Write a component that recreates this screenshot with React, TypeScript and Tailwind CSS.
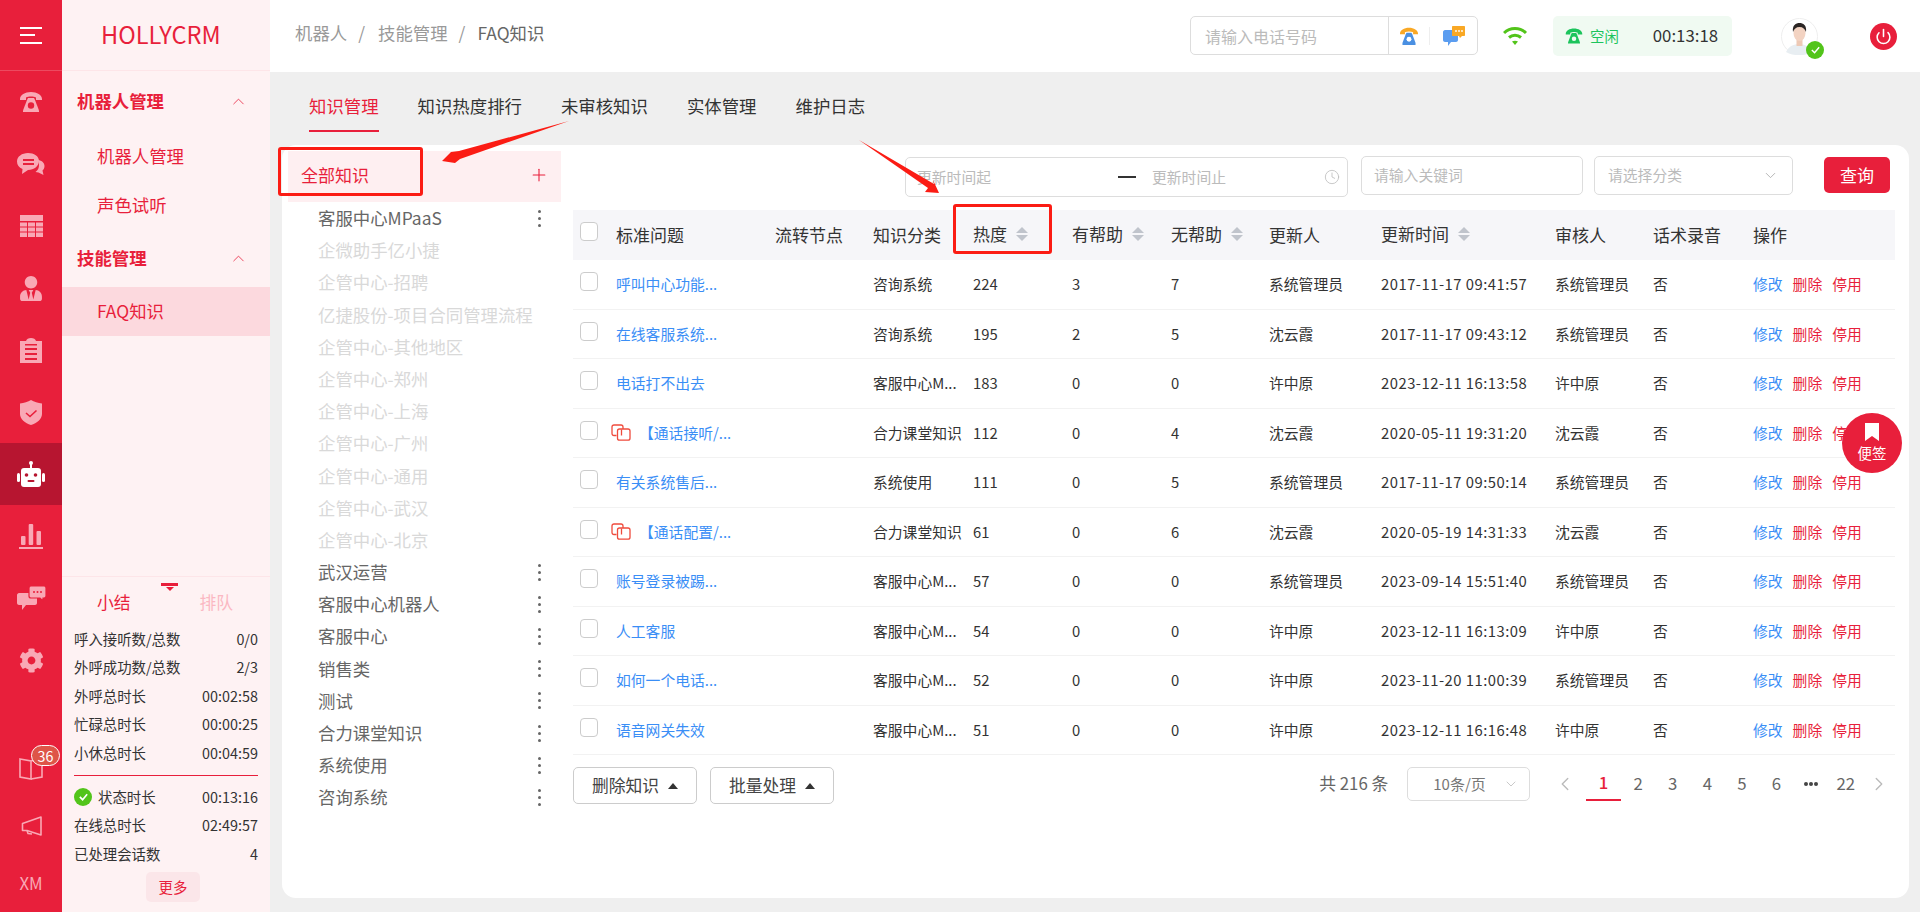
import { ChevronDown, ChevronLeft, ChevronRight, ChevronUp, Clock, Plus, Power } from 'lucide-react'
import { FaCog, FaUserTie } from 'react-icons/fa'

const rows = [
  { title: '呼叫中心功能...', cat: '咨询系统', hot: 224, yes: 3, no: 7, by: '系统管理员', time: '2017-11-17 09:41:57', rev: '系统管理员' },
  { title: '在线客服系统...', cat: '咨询系统', hot: 195, yes: 2, no: 5, by: '沈云霞', time: '2017-11-17 09:43:12', rev: '系统管理员' },
  { title: '电话打不出去', cat: '客服中心M...', hot: 183, yes: 0, no: 0, by: '许中原', time: '2023-12-11 16:13:58', rev: '许中原' },
  { title: '【通话接听/...', cat: '合力课堂知识', hot: 112, yes: 0, no: 4, by: '沈云霞', time: '2020-05-11 19:31:20', rev: '沈云霞', linked: true },
  { title: '有关系统售后...', cat: '系统使用', hot: 111, yes: 0, no: 5, by: '系统管理员', time: '2017-11-17 09:50:14', rev: '系统管理员' },
  { title: '【通话配置/...', cat: '合力课堂知识', hot: 61, yes: 0, no: 6, by: '沈云霞', time: '2020-05-19 14:31:33', rev: '沈云霞', linked: true },
  { title: '账号登录被踢...', cat: '客服中心M...', hot: 57, yes: 0, no: 0, by: '系统管理员', time: '2023-09-14 15:51:40', rev: '系统管理员' },
  { title: '人工客服', cat: '客服中心M...', hot: 54, yes: 0, no: 0, by: '许中原', time: '2023-12-11 16:13:09', rev: '许中原' },
  { title: '如何一个电话...', cat: '客服中心M...', hot: 52, yes: 0, no: 0, by: '许中原', time: '2023-11-20 11:00:39', rev: '系统管理员' },
  { title: '语音网关失效', cat: '客服中心M...', hot: 51, yes: 0, no: 0, by: '许中原', time: '2023-12-11 16:16:48', rev: '许中原' },
]

const tree = [
  { name: '客服中心MPaaS', more: true },
  { name: '企微助手亿小捷' },
  { name: '企管中心-招聘' },
  { name: '亿捷股份-项目合同管理流程' },
  { name: '企管中心-其他地区' },
  { name: '企管中心-郑州' },
  { name: '企管中心-上海' },
  { name: '企管中心-广州' },
  { name: '企管中心-通用' },
  { name: '企管中心-武汉' },
  { name: '企管中心-北京' },
  { name: '武汉运营', more: true },
  { name: '客服中心机器人', more: true },
  { name: '客服中心', more: true },
  { name: '销售类', more: true },
  { name: '测试', more: true },
  { name: '合力课堂知识', more: true },
  { name: '系统使用', more: true },
  { name: '咨询系统', more: true },
]

const stats = [
  ['呼入接听数/总数', '0/0'],
  ['外呼成功数/总数', '2/3'],
  ['外呼总时长', '00:02:58'],
  ['忙碌总时长', '00:00:25'],
  ['小休总时长', '00:04:59'],
]

const cols = 'grid grid-cols-[43px_159px_98px_100px_99px_99px_98px_112px_174px_98px_100px_142px]'

function RailIcon({ name }: { name: string }) {
  const c = '#f9a8b5'
  if (name === 'phone')
    return (
      <svg viewBox="0 0 24 22" className="w-[24px] h-[22px]">
        <path d="M1 8c0-4 5-7 11-7s11 3 11 7v1h-6V6.500c-1.500-.6-3-.9-5-.9s-3.500.3-5 .9V9H1V8z" fill={c} />
        <path d="M9 7h6l1 2 4 10.500V21H4v-1.500L8 9l1-2z" fill={c} />
        <circle cx="12" cy="14.500" r="3.200" fill="#e81f3b" />
      </svg>
    )
  if (name === 'chat')
    return (
      <svg viewBox="0 0 28 22" className="w-[28px] h-[22px]">
        <path d="M21 7c4 .5 6.500 3 6.500 6 0 2-1 3.500-2 4.500l1 4.500-5-2.500-3-.5c2.500-2 3.500-4 3.500-7 0-2-.2-3.500-1-5z" fill={c} />
        <path d="M11 0c6 0 11 3 11 8s-5 9-11 9l-6 4 .5-5C2 14.500 0 12 0 8.500 0 3.500 5 0 11 0z" fill={c} />
        <rect x="6" y="6" width="11" height="2" fill="#e81f3b" />
        <rect x="6" y="10" width="11" height="2" fill="#e81f3b" />
      </svg>
    )
  if (name === 'grid')
    return (
      <svg viewBox="0 0 23 22" className="w-[23px] h-[22px]" fill={c}>
        <rect x="0" y="0" width="23" height="6" />
        <rect x="0" y="7.500" width="7" height="4" />
        <rect x="8" y="7.500" width="7" height="4" />
        <rect x="16" y="7.500" width="7" height="4" />
        <rect x="0" y="12.500" width="7" height="4" />
        <rect x="8" y="12.500" width="7" height="4" />
        <rect x="16" y="12.500" width="7" height="4" />
        <rect x="0" y="17.500" width="7" height="4.500" />
        <rect x="8" y="17.500" width="7" height="4.500" />
        <rect x="16" y="17.500" width="7" height="4.500" />
      </svg>
    )
  if (name === 'clip')
    return (
      <svg viewBox="0 0 22 25" className="w-[22px] h-[25px]">
        <path d="M0 3h6c.5-2 2.500-3 5-3s4.500 1 5 3h6v22H0V3z" fill={c} />
        <rect x="5" y="10" width="12" height="2" fill="#e81f3b" />
        <rect x="5" y="15" width="12" height="2" fill="#e81f3b" />
        <rect x="5" y="20" width="12" height="2" fill="#e81f3b" />
        <rect x="5" y="6" width="12" height="1.500" fill="#e81f3b" />
      </svg>
    )
  if (name === 'shield')
    return (
      <svg viewBox="0 0 22 25" className="w-[22px] h-[25px]">
        <path d="M11 0c3 2 7 3 11 3.500V14c0 5-5 9-11 11C5 23 0 19 0 14V3.500C4 3 8 2 11 0z" fill={c} />
        <path d="M6 13l4 3.500 6.500-6" fill="none" stroke="#e81f3b" strokeWidth="1.600" />
      </svg>
    )
  if (name === 'robot')
    return (
      <svg viewBox="0 0 28 26" className="w-[28px] h-[26px]">
        <circle cx="14" cy="2" r="2" fill="#fff" />
        <rect x="13" y="3" width="2" height="5" fill="#fff" />
        <rect x="4" y="7" width="20" height="19" rx="3" fill="#fff" />
        <rect x="0" y="12" width="3" height="9" rx="1.500" fill="#fff" />
        <rect x="25" y="12" width="3" height="9" rx="1.500" fill="#fff" />
        <circle cx="9.500" cy="14" r="1.800" fill="#b71530" />
        <circle cx="18.500" cy="14" r="1.800" fill="#b71530" />
        <rect x="10.500" y="19" width="7" height="2" rx="1" fill="#b71530" />
      </svg>
    )
  if (name === 'bars')
    return (
      <svg viewBox="0 0 24 25" className="w-[24px] h-[25px]" fill={c}>
        <rect x="2" y="12" width="4.500" height="9" rx="1" />
        <rect x="9.700" y="0" width="4.500" height="21" rx="1" />
        <rect x="17.500" y="7" width="4.500" height="14" rx="1" />
        <rect x="0" y="23" width="24" height="2" />
      </svg>
    )
  if (name === 'chat2')
    return (
      <svg viewBox="0 0 29 24" className="w-[29px] h-[24px]">
        <path d="M2 7h16c1 0 2 1 2 2v8c0 1-1 2-2 2H9l-4 5v-5H2c-1 0-2-1-2-2V9c0-1 1-2 2-2z" fill={c} />
        <path d="M14 0h13c1 0 2 1 2 2v8c0 1-1 2-2 2h-1v3l-3-3h-9c-1 0-2-1-2-2V2c0-1 1-2 2-2z" fill={c} stroke="#e81f3b" strokeWidth="1.200" />
        <circle cx="17" cy="6" r="1" fill="#e81f3b" />
        <circle cx="20.500" cy="6" r="1" fill="#e81f3b" />
        <circle cx="24" cy="6" r="1" fill="#e81f3b" />
      </svg>
    )
  if (name === 'book')
    return (
      <svg viewBox="0 0 24 24" className="w-[24px] h-[24px]" fill="none" stroke={c} strokeWidth="1.600">
        <path d="M1 3l11 2v18L1 21V3z" />
        <path d="M12 5l11-3v19l-11 2" />
      </svg>
    )
  return (
    <svg viewBox="0 0 21 21" className="w-[21px] h-[21px]" fill="none" stroke={c} strokeWidth="1.600" strokeLinejoin="round">
      <path d="M20 1v18L6 14.500H1.500V7.500L20 1z" />
      <path d="M6 14.500l1 3 4 .5" />
    </svg>
  )
}

function RailItem({ name, active }: { name: string; active?: boolean }) {
  return (
    <div className={`h-[62px] flex items-center justify-center ${active ? 'bg-[#b71530]' : ''}`}>
      {name === 'user' ? <FaUserTie className="w-[22px] h-[25px] text-[#f9a8b5]" /> : name === 'gear' ? <FaCog className="w-[25px] h-[25px] text-[#f9a8b5]" /> : <RailIcon name={name} />}
    </div>
  )
}

function Rail() {
  return (
    <div className="w-[62px] shrink-0 bg-[#e81f3b] flex flex-col">
      <div className="h-[71px] border-b border-[#ec4a60] flex flex-col justify-center gap-[5.500px] pl-[20px]">
        <div className="w-[22px] h-[2px] bg-white" />
        <div className="w-[15px] h-[2px] bg-white" />
        <div className="w-[22px] h-[2px] bg-white" />
      </div>
      {['phone', 'chat', 'grid', 'user', 'clip', 'shield'].map((n) => (
        <RailItem key={n} name={n} />
      ))}
      <RailItem name="robot" active />
      {['bars', 'chat2', 'gear'].map((n) => (
        <RailItem key={n} name={n} />
      ))}
      <div className="mt-auto">
        <div className="h-[59px] flex items-center justify-center relative">
          <RailIcon name="book" />
          <span className="absolute left-[31px] top-[7px] w-[29px] h-[21px] rounded-full bg-[#de5548] border border-white text-white text-[14.400px] leading-[19px] text-center">36</span>
        </div>
        <div className="h-[59px] flex items-center justify-center">
          <RailIcon name="mega" />
        </div>
        <div className="h-[56px] flex items-center justify-center pb-[1px] text-[#f9a8b5] text-[16.800px]">XM</div>
      </div>
    </div>
  )
}

function Sidebar() {
  return (
    <div className="w-[208px] shrink-0 bg-[#fef2f3] flex flex-col text-[#e81f3b]">
      <div className="h-[71px] border-b border-[#fde5e8] flex items-center pl-[39px] text-[23.600px]">HOLLYCRM</div>
      <div className="h-[61px] flex items-center justify-between pl-[15px] pr-[22px] text-[17.400px] font-bold">
        <span>机器人管理</span>
        <ChevronUp className="w-[19px] h-[19px]" strokeWidth={1} />
      </div>
      <div className="h-[49px] flex items-center pl-[35px] text-[17.400px]">机器人管理</div>
      <div className="h-[49px] flex items-center pl-[35px] text-[17.400px]">声色试听</div>
      <div className="h-[57px] flex items-center justify-between pl-[15px] pr-[22px] text-[17.400px] font-bold">
        <span>技能管理</span>
        <ChevronUp className="w-[19px] h-[19px]" strokeWidth={1} />
      </div>
      <div className="h-[49px] flex items-center pl-[35px] text-[17.400px] bg-[#fcd9de]">FAQ知识</div>

      <div className="mt-auto border-t border-[#fde5e8] relative">
        <div className="absolute left-[99px] top-[6px] w-[17px] h-[3px] bg-[#e81f3b]" />
        <div className="absolute left-[104px] top-[10px] w-0 h-0 border-x-[4px] border-x-transparent border-t-[4px] border-t-[#e81f3b]" />
        <div className="flex pt-[12px] pl-[35px] text-[16.800px] leading-[26px]">
          <span>小结</span>
          <span className="ml-[69px] text-[#fbb8c2]">排队</span>
        </div>
        <div className="px-[12px] pt-[10px] text-[#333] text-[14.400px]">
          {stats.map(([k, v]) => (
            <div key={k} className="flex justify-between h-[28.400px] items-center">
              <span>{k}</span>
              <span>{v}</span>
            </div>
          ))}
          <div className="border-t border-[#e81f3b] mt-[8px] mb-[7px]" />
          <div className="flex justify-between h-[28.500px] items-center">
            <span className="flex items-center gap-[6px]">
              <span className="w-[18px] h-[18px] rounded-full bg-[#52c41a] flex items-center justify-center">
                <svg viewBox="0 0 12 12" className="w-[11px] h-[11px]" fill="none" stroke="#fff" strokeWidth="1.800">
                  <path d="M2 6.500l3 3 5-6" />
                </svg>
              </span>
              状态时长
            </span>
            <span>00:13:16</span>
          </div>
          <div className="flex justify-between h-[28.500px] items-center">
            <span>在线总时长</span>
            <span>02:49:57</span>
          </div>
          <div className="flex justify-between h-[28.500px] items-center">
            <span>已处理会话数</span>
            <span>4</span>
          </div>
        </div>
        <div className="flex justify-center pl-[14px] pt-[4px] pb-[10px]">
          <div className="w-[54px] h-[30px] rounded-[5px] bg-[#fbe6e9] text-[#e81f3b] text-[14.400px] flex items-center justify-center">更多</div>
        </div>
      </div>
    </div>
  )
}

function Header() {
  return (
    <div className="h-[72px] shrink-0 bg-white flex items-center pl-[25px] text-[17.400px]">
      <div className="flex items-center -mt-[5px] text-[#999]">
        <span>机器人</span>
        <span className="ml-[11px] mr-[13px]">/</span>
        <span>技能管理</span>
        <span className="ml-[11px] mr-[12px]">/</span>
        <span className="text-[#666]">FAQ知识</span>
      </div>

      <div className="ml-auto w-[288px] h-[39px] -mt-[1px] border border-[#ddd] rounded-[5px] flex items-center">
        <div className="w-[198px] h-full border-r border-[#ddd] pl-[14px] text-[#bbb] text-[16px] flex items-center">请输入电话号码</div>
        <svg viewBox="0 0 24 22" className="ml-[10px] w-[20px] h-[18px]">
          <path d="M1 8c0-4 5-7 11-7s11 3 11 7v1h-6V6.500c-1.500-.6-3-.9-5-.9s-3.500.3-5 .9V9H1V8z" fill="#f9a825" />
          <path d="M9 7h6l1 2 4 10.500V22H4v-2.500L8 9l1-2z" fill="#4a90e2" />
          <circle cx="12" cy="15" r="3" fill="#fff" />
        </svg>
        <div className="ml-[10px] w-[1px] h-[18px] bg-[#eee]" />
        <svg viewBox="0 0 22 22" className="ml-[13px] w-[22px] h-[22px]">
          <path d="M2 5h11c1 0 2 1 2 2v8c0 1-1 2-2 2H8l-3 4v-4H2c-1 0-2-1-2-2V7c0-1 1-2 2-2z" fill="#5b9df0" />
          <path d="M10 1h11c.6 0 1 .4 1 1v8c0 .6-.4 1-1 1h-2l-2 2-1-2h-6c-.6 0-1-.4-1-1V2c0-.6.4-1 1-1z" fill="#f9a825" />
          <circle cx="13" cy="6" r=".9" fill="#fff" />
          <circle cx="16" cy="6" r=".9" fill="#fff" />
          <circle cx="19" cy="6" r=".9" fill="#fff" />
        </svg>
      </div>

      <svg viewBox="0 0 24 20" className="ml-[25px] w-[24px] h-[20px] -mt-[1px]" fill="none" stroke="#52c41a" strokeWidth="3">
        <path d="M1 7c6-6 16-6 22 0" />
        <path d="M6 11.500c3.500-3 8.500-3 12 0" />
        <path d="M12 19l-3-3.500c2-1 4-1 6 0z" fill="#52c41a" stroke="none" />
      </svg>

      <div className="ml-[26px] w-[179px] h-[40px] rounded-[5px] bg-[#f0faf2] flex items-center pl-[12px]">
        <svg viewBox="0 0 24 22" className="w-[18px] h-[18px]">
          <path d="M1 8c0-4 5-7 11-7s11 3 11 7v1h-6V6.500c-1.500-.6-3-.9-5-.9s-3.500.3-5 .9V9H1V8z" fill="#1cc45c" />
          <path d="M9 7h6l1 2 4 10.500V21H4v-1.500L8 9l1-2z" fill="#1cc45c" />
          <circle cx="12" cy="14.500" r="3" fill="#f0faf2" />
        </svg>
        <span className="ml-[7px] text-[#1cc45c] text-[14.400px]">空闲</span>
        <span className="ml-[34px] text-[#333] text-[16.800px]">00:13:18</span>
      </div>

      <div className="ml-[49px] relative w-[37px] h-[37px]">
        <svg viewBox="0 0 37 37" className="w-[37px] h-[37px]">
          <circle cx="18.500" cy="18.500" r="18" fill="#fff" stroke="#eee" />
          <path d="M5 34c3-6 8-8 13-8s10 2 13 8c-4 2.500-8 3-13 3s-9-.5-13-3z" fill="#e8eef2" />
          <rect x="15.500" y="20" width="6" height="8" fill="#eec9b5" />
          <ellipse cx="18.500" cy="15" rx="6" ry="8" fill="#f3d3c2" />
          <path d="M12 14c-1-7 3-9 6.500-9s7.500 2 6.500 9c-1-3-3-5-6.500-5s-5.500 2-6.500 5z" fill="#2b2524" />
        </svg>
        <span className="absolute -right-[6px] bottom-[-4px] w-[18px] h-[18px] rounded-full bg-[#52c41a] flex items-center justify-center">
          <svg viewBox="0 0 12 12" className="w-[11px] h-[11px]" fill="none" stroke="#fff" strokeWidth="1.600">
            <path d="M2 6.500l3 3 5-6" />
          </svg>
        </span>
      </div>

      <div className="ml-[52px] mr-[23px] w-[27px] h-[27px] rounded-full bg-[#e81f3b] flex items-center justify-center">
        <Power className="w-[17px] h-[17px] text-white" strokeWidth={2.200} />
      </div>
    </div>
  )
}

function Tabs() {
  const tabs = ['知识管理', '知识热度排行', '未审核知识', '实体管理', '维护日志']
  return (
    <div className="h-[73px] shrink-0 flex gap-[39px] pl-[27px] text-[17.400px] text-[#333]">
      {tabs.map((t, i) => (
        <div key={t} className={`h-[60px] flex items-center pt-[10px] border-b-2 ${i === 0 ? 'text-[#e81f3b] border-[#e81f3b]' : 'border-transparent'}`}>
          {t}
        </div>
      ))}
    </div>
  )
}

function Tree() {
  return (
    <div className="w-[291px] shrink-0 pt-[6px] pl-[6px] pr-[12px]">
      <div className="h-[51px] bg-[#feeff1] flex items-center justify-between pl-[13px] pr-[12px] pb-[3px] text-[#e81f3b] text-[17px]">
        <span>全部知识</span>
        <Plus className="w-[20px] h-[20px]" strokeWidth={1.300} />
      </div>
      {tree.map((n) => (
        <div key={n.name} className={`h-[32.200px] flex items-center justify-between pl-[30px] pr-[20px] text-[17.400px] ${n.more ? 'text-[#666]' : 'text-[#d9d9d9]'}`}>
          <span className="whitespace-nowrap">{n.name}</span>
          {n.more && (
            <span className="flex flex-col gap-[4px]">
              <i className="w-[3px] h-[3px] rounded-full bg-[#666]" />
              <i className="w-[3px] h-[3px] rounded-full bg-[#666]" />
              <i className="w-[3px] h-[3px] rounded-full bg-[#666]" />
            </span>
          )}
        </div>
      ))}
    </div>
  )
}

function SortHead({ label }: { label: string }) {
  return (
    <div className="flex items-center gap-[9px] -mt-[2px]">
      <span>{label}</span>
      <span className="flex flex-col gap-[1.500px]">
        <i className="w-0 h-0 border-x-[6px] border-x-transparent border-b-[6px] border-b-[#c0c4cc]" />
        <i className="w-0 h-0 border-x-[6px] border-x-transparent border-t-[6px] border-t-[#c0c4cc]" />
      </span>
    </div>
  )
}

function Box() {
  return <div className="mt-[12px] ml-[7px] w-[18px] h-[19px] rounded-[4px] border border-[#ccc] bg-white" />
}

function LinkIcon() {
  return (
    <svg viewBox="0 0 20 17" className="w-[20px] h-[17px] shrink-0" fill="none" stroke="#ef4b3c" strokeWidth="1.300">
      <path d="M5.500 11.500H3c-1.200 0-2-.8-2-2V3c0-1.200.8-2 2-2h7c1.200 0 2 .8 2 2v2" />
      <rect x="6.500" y="5" width="12.500" height="11.200" rx="2" />
      <path d="M10.500 5.500v6" />
    </svg>
  )
}

function Table() {
  return (
    <div className="w-[1322px] text-[14.800px] text-[#333]">
      <div className={`${cols} h-[50px] bg-[#f6f6f9] items-center text-[17px]`}>
        <div className="self-start">
          <Box />
        </div>
        <div>标准问题</div>
        <div>流转节点</div>
        <div>知识分类</div>
        <SortHead label="热度" />
        <SortHead label="有帮助" />
        <SortHead label="无帮助" />
        <div>更新人</div>
        <SortHead label="更新时间" />
        <div>审核人</div>
        <div>话术录音</div>
        <div>操作</div>
      </div>
      {rows.map((r) => (
        <div key={r.time} className={`${cols} h-[49.500px] border-b border-[#f2f2f2] items-center`}>
          <div className="self-start">
            <Box />
          </div>
          <div className="text-[#3a8ef6] flex items-center -ml-[5px]">
            {r.linked ? (
              <>
                <LinkIcon />
                <span className="ml-[8px]">{r.title}</span>
              </>
            ) : (
              <span className="ml-[5px]">{r.title}</span>
            )}
          </div>
          <div />
          <div className="whitespace-nowrap">{r.cat}</div>
          <div>{r.hot}</div>
          <div>{r.yes}</div>
          <div>{r.no}</div>
          <div>{r.by}</div>
          <div className="whitespace-nowrap tracking-[0.5px]">{r.time}</div>
          <div>{r.rev}</div>
          <div>否</div>
          <div className="flex gap-[10px]">
            <span className="text-[#3a8ef6]">修改</span>
            <span className="text-[#e81f3b]">删除</span>
            <span className="text-[#e81f3b]">停用</span>
          </div>
        </div>
      ))}
    </div>
  )
}

function Pager() {
  const pages = ['1', '2', '3', '4', '5', '6', '...', '22']
  return (
    <div className="flex items-center text-[16.800px] text-[#666]">
      <span>共 216 条</span>
      <div className="ml-[19px] w-[123px] h-[34px] border border-[#ddd] rounded-[5px] flex items-center justify-between pl-[25px] pr-[10px] text-[#777] text-[15px]">
        <span>10条/页</span>
        <ChevronDown className="w-[16px] h-[16px] text-[#bbb]" strokeWidth={1.200} />
      </div>
      <div className="ml-[24px] flex items-center">
        <ChevronLeft className="w-[22px] h-[22px] text-[#bbb] mr-[10px]" strokeWidth={1.500} />
        {pages.map((p, i) =>
          p === '...' ? (
            <span key={p} className="w-[34.600px] h-[34px] flex items-center justify-center gap-[1.500px]">
              <i className="w-[3.500px] h-[3.500px] rounded-full bg-[#444]" />
              <i className="w-[3.500px] h-[3.500px] rounded-full bg-[#444]" />
              <i className="w-[3.500px] h-[3.500px] rounded-full bg-[#444]" />
            </span>
          ) : (
            <span key={p} className={`w-[34.600px] h-[34px] flex items-center justify-center ${i === 0 ? 'text-[#e81f3b] border-b-2 border-[#e81f3b] font-medium' : ''}`}>
              {p}
            </span>
          ),
        )}
        <ChevronRight className="w-[22px] h-[22px] text-[#bbb] ml-[5px]" strokeWidth={1.500} />
      </div>
    </div>
  )
}

function ActionBtn({ label }: { label: string }) {
  return (
    <div className="h-[37px] w-[124px] border border-[#ccc] rounded-[5px] flex items-center justify-center gap-[9px] text-[16.800px] text-[#444]">
      <span>{label}</span>
      <i className="w-0 h-0 border-x-[5px] border-x-transparent border-b-[6px] border-b-[#333]" />
    </div>
  )
}

function Content() {
  return (
    <div className="flex-1 min-w-0">
      <div className="h-[65px] flex justify-end pr-[19px] pt-[11px] gap-[11px] text-[14.800px] text-[#bbb]">
        <div className="w-[443px] h-[40px] mt-[1px] border border-[#ddd] rounded-[5px] flex items-center pl-[11px] mr-[2px]">
          <span>更新时间起</span>
          <span className="ml-[127px] w-[18px] h-[1.500px] bg-[#333]" />
          <span className="ml-[16px]">更新时间止</span>
          <Clock className="ml-auto mr-[7px] w-[16px] h-[16px] text-[#bbb]" strokeWidth={1.200} />
        </div>
        <div className="w-[222px] h-[39px] border border-[#ddd] rounded-[5px] flex items-center pl-[12px]">请输入关键词</div>
        <div className="w-[199px] h-[39px] border border-[#ddd] rounded-[5px] flex items-center justify-between pl-[13px] pr-[13px] mr-[20px]">
          <span>请选择分类</span>
          <ChevronDown className="w-[17px] h-[17px] text-[#aaa]" strokeWidth={1.200} />
        </div>
        <div className="w-[66px] h-[36px] mt-[1px] rounded-[5px] bg-[#e81f3b] text-white text-[17px] flex items-center justify-center">查询</div>
      </div>
      <Table />
      <div className="mt-[12px] pr-[19px] flex items-start justify-between">
        <div className="flex gap-[13px]">
          <ActionBtn label="删除知识" />
          <ActionBtn label="批量处理" />
        </div>
        <Pager />
      </div>
    </div>
  )
}

export default function App() {
  return (
    <div className="relative w-[1920px] h-[912px] overflow-hidden flex bg-[#efefef] font-['Noto_Sans_CJK_SC','Noto_Sans',sans-serif]">
      <Rail />
      <Sidebar />
      <div className="flex-1 min-w-0 flex flex-col">
        <Header />
        <div className="flex-1 min-h-0 flex flex-col pl-[12px] pr-[11px] pb-[14px]">
          <Tabs />
          <div className="flex-1 min-h-0 flex rounded-[14px] bg-white">
            <Tree />
            <Content />
          </div>
        </div>
      </div>

      {/* floating note button */}
      <div className="absolute left-[1842px] top-[413px] w-[60px] h-[60px] rounded-full bg-[#e81f3b] flex flex-col items-center justify-center text-white text-[14.400px]">
        <svg viewBox="0 0 14 18" className="w-[14px] h-[18px]" fill="#fff">
          <path d="M0 0h14v18l-7-5-7 5V0z" />
        </svg>
        <span className="leading-[20px] mt-[2px]">便签</span>
      </div>

      {/* annotations drawn on the screenshot */}
      <div className="absolute left-[278px] top-[147px] w-[145px] h-[49px] border-[3px] border-[#fb1c14] rounded-[3px]" />
      <div className="absolute left-[953px] top-[204px] w-[99px] h-[50px] border-[3px] border-[#fb1c14] rounded-[3px]" />
      <svg viewBox="0 0 1920 912" className="absolute inset-0 w-[1920px] h-[912px] pointer-events-none">
        <polygon points="569,121 459,151 451,152 442,161 455,163 460,159" fill="#fb1c14" />
        <polygon points="859,140 934,184 933,180 939,193 925,192 928,188" fill="#fb1c14" />
      </svg>
    </div>
  )
}
